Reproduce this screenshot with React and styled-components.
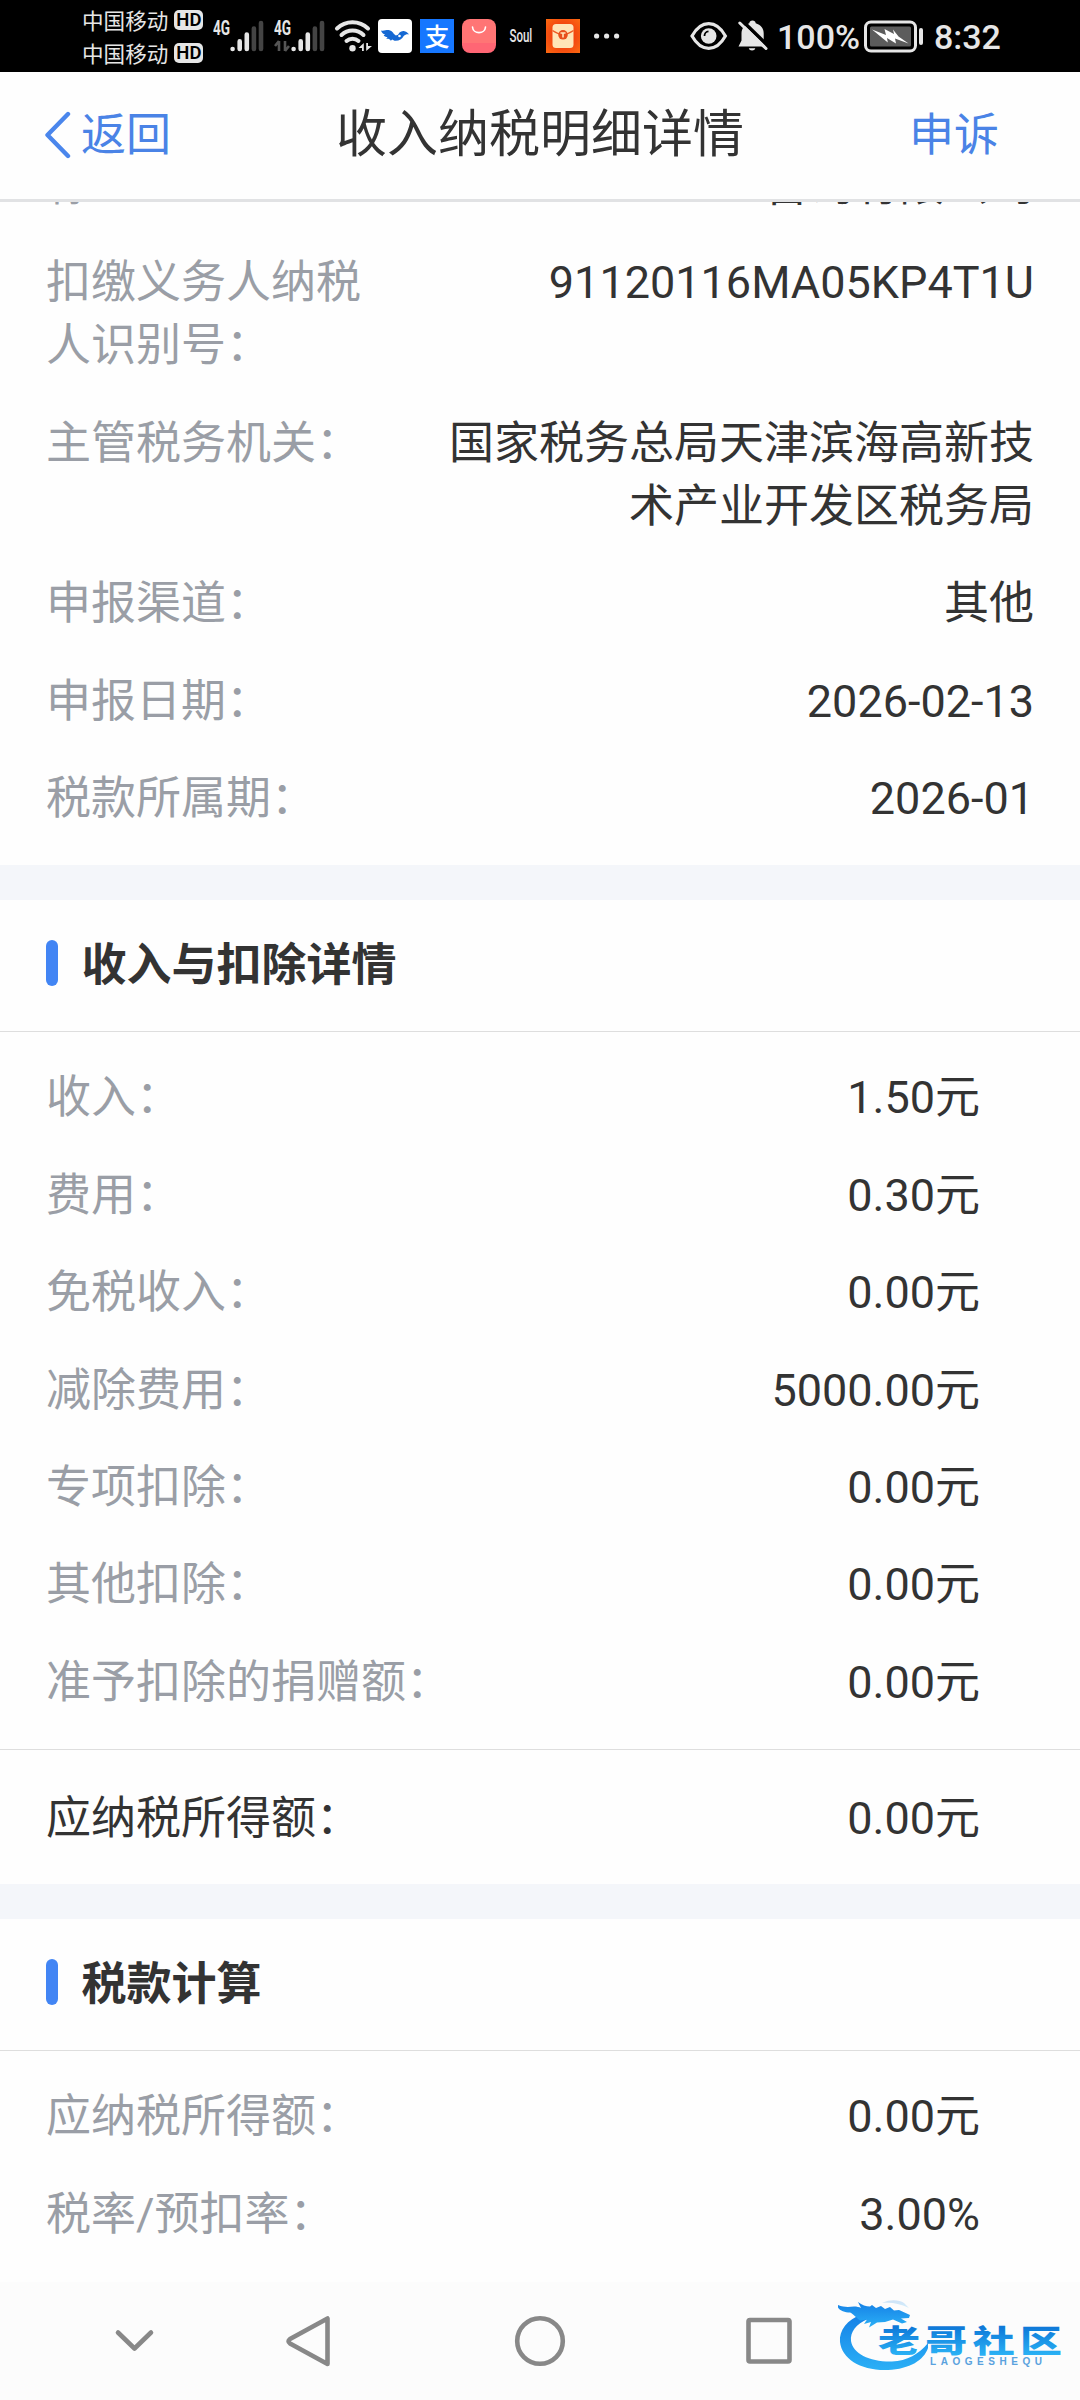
import styled, { createGlobalStyle } from 'styled-components';

const GlobalStyle = createGlobalStyle`
  * {
    box-sizing: border-box;
  }
  body {
    margin: 0;
    background: #fefefe;
    font-family: Roboto, 'Noto Sans CJK SC', sans-serif;
    color: #333;
  }
`;

const Screen = styled.div`
  display: flex;
  flex-direction: column;
  width: 1080px;
  height: 2400px;
  overflow: hidden;
  background: #fefefe;
`;

const StatusBar = styled.div`
  display: flex;
  align-items: center;
  flex: none;
  height: 72px;
  padding-left: 82px;
  background: #000;
  color: #e6e6e6;
`;
const Carriers = styled.div`
  display: flex;
  flex-direction: column;
  width: 131px;
`;
const Carrier = styled.div`
  display: flex;
  align-items: center;
  gap: 6px;
  height: 33px;
  font-family: 'Noto Sans CJK SC', sans-serif;
  font-size: 21.6px;
  line-height: 33px;
`;
const HdBadge = styled.span`
  width: 29px;
  height: 20px;
  border-radius: 5px;
  background: #e6e6e6;
  color: #000;
  font-family: Roboto, sans-serif;
  font-size: 18.5px;
  font-weight: 600;
  line-height: 21px;
  text-align: center;
`;
const StatusIcon = styled.svg`
  flex: none;
  display: block;
  width: ${({ $w }) => $w}px;
  height: 72px;
  margin-left: ${({ $gap = 0 }) => $gap}px;
`;
const AppIcon = styled.div`
  flex: none;
  width: 34px;
  height: 34px;
  margin-left: ${({ $gap = 8 }) => $gap}px;
  border-radius: ${({ $radius = 0 }) => $radius}px;
  background: ${({ $bg }) => $bg};
  color: #fff;
  svg {
    display: block;
  }
`;
const Alipay = styled(AppIcon)`
  font-family: 'Noto Sans CJK SC', sans-serif;
  font-size: 25px;
  font-weight: 500;
  line-height: 33px;
  text-align: center;
`;
const SoulLabel = styled.div`
  width: 34px;
  margin-left: 8px;
  font-size: 18px;
  font-weight: 500;
  line-height: 34px;
  text-align: center;
  span {
    display: inline-block;
    transform: scaleX(0.64);
    margin: 0 -8px;
  }
`;
const StatusText = styled.span`
  width: ${({ $w }) => $w}px;
  margin-left: ${({ $gap }) => $gap}px;
  font-size: 34px;
  font-weight: 500;
  line-height: 72px;
  padding-top: 2px;
  white-space: nowrap;
`;

const Header = styled.header`
  display: grid;
  grid-template-columns: 1fr auto 1fr;
  align-items: center;
  flex: none;
  height: 130px;
  padding: 0 81px 1px 44px;
  border-bottom: 3px solid #e1e2e4;
`;
const HeaderAction = styled.div`
  display: flex;
  align-items: center;
  justify-content: ${({ $end }) => ($end ? 'flex-end' : 'flex-start')};
  gap: 10px;
  font-size: 45px;
  line-height: 63px;
  color: #4a83e6;
`;
const Title = styled.h1`
  margin: 0 0 0 37px;
  font-size: 51px;
  font-weight: 400;
  line-height: 70px;
`;

const Content = styled.main`
  flex: 1;
  min-height: 0;
  overflow: hidden;
`;
const Card = styled.section`
  background: #fefefe;
  margin-bottom: ${({ $gap = 35 }) => $gap}px;
`;
const Backdrop = styled.div`
  background: #f4f6fa;
`;
const SectionTitle = styled.h2`
  display: flex;
  align-items: center;
  gap: 23.5px;
  height: 132px;
  margin: 0;
  padding: 0 46px 7px;
  border-bottom: 1px solid #dedede;
  font-size: 45px;
  font-weight: 700;
  &::before {
    content: '';
    width: 12px;
    height: 46px;
    margin-top: 2px;
    border-radius: 6px;
    background: #4285f4;
  }
`;
const Rows = styled.dl`
  display: flex;
  flex-direction: column;
  gap: 34.4px;
  margin: 0;
  padding: ${({ $pad }) => $pad};
  margin-top: ${({ $scrolled = 0 }) => -$scrolled}px;
`;
const Row = styled.div`
  display: flex;
  justify-content: space-between;
  font-size: 45px;
  line-height: 63px;
`;
const Label = styled.dt`
  width: ${({ $narrow }) => ($narrow ? '330px' : 'auto')};
  color: ${({ $strong }) => ($strong ? '#333' : '#9a9ea6')};
`;
const Value = styled.dd`
  max-width: 600px;
  margin: 0;
  text-align: right;
`;
const Total = styled.dl`
  margin: 0;
  padding: 36.5px 100px 34px 46px;
  border-top: 1px solid #dedede;
`;

const NavBar = styled.nav`
  display: flex;
  align-items: center;
  flex: none;
  height: 118px;
  padding-left: 112px;
  background: #fcfcfc;
`;
const NavIcon = styled.svg`
  flex: none;
  width: 54px;
  height: 54px;
  margin-right: ${({ $after }) => $after}px;
  fill: none;
  stroke: #888;
  stroke-width: 4.6;
  stroke-linecap: round;
  stroke-linejoin: round;
`;
const Brand = styled.svg`
  flex: none;
  width: 240px;
  height: 90px;
`;

// the list is scrolled, only the tail of the first row stays in view
const declaration = [
  ['称：', '咨询有限公司'],
  ['扣缴义务人纳税人识别号：', '91120116MA05KP4T1U'],
  ['主管税务机关：', '国家税务总局天津滨海高新技术产业开发区税务局'],
  ['申报渠道：', '其他'],
  ['申报日期：', '2026-02-13'],
  ['税款所属期：', '2026-01'],
];

const income = [
  ['收入：', '1.50元'],
  ['费用：', '0.30元'],
  ['免税收入：', '0.00元'],
  ['减除费用：', '5000.00元'],
  ['专项扣除：', '0.00元'],
  ['其他扣除：', '0.00元'],
  ['准予扣除的捐赠额：', '0.00元'],
];

const taxes = [
  ['应纳税所得额：', '0.00元'],
  ['税率/预扣率：', '3.00%'],
];

const DetailRow = ({ item, narrow, strong }) => (
  <Row>
    <Label $narrow={narrow} $strong={strong}>
      {item[0]}
    </Label>
    <Value>{item[1]}</Value>
  </Row>
);

const Signal = ({ gap, data }) => (
  <StatusIcon $w={51} $gap={gap} viewBox="0 0 51 72">
    <g transform="translate(0 34.5) scale(0.68 1)">
      <text x="0" y="0" fontSize="20" fontWeight="700" fill="#e6e6e6">
        4G
      </text>
    </g>
    {data && (
      <path d="M5 41v10M5 41l-4 5M11 41v10M11 51l4-5" stroke="#555" strokeWidth="2.6" fill="none" />
    )}
    <g strokeWidth="4.6" strokeLinecap="round">
      <path d="M19.6 49v0M26.7 41.4V49M33.8 34.5V49" stroke="#e6e6e6" />
      <path d="M40.9 28.5V49M48 23V49" stroke="#444" />
    </g>
  </StatusIcon>
);

const Wifi = () => (
  <StatusIcon $w={38} $gap={9} viewBox="0 0 38 72">
    <g fill="none" stroke="#e6e6e6" strokeWidth="4" strokeLinecap="round">
      <path d="M3 28.5a22.5 22.5 0 0 1 31 0" />
      <path d="M7.5 35a16 16 0 0 1 22 0" />
      <path d="M12.5 41a9 9 0 0 1 12 0" />
    </g>
    <circle cx="18.5" cy="48.3" r="3.2" fill="#e6e6e6" />
    <path d="M29.8 43v8h-1.8v-3h-3.5zM32.2 51v-8h1.8v3h4z" fill="#e6e6e6" />
  </StatusIcon>
);

const Status = () => (
  <StatusBar>
    <Carriers>
      <Carrier>
        中国移动<HdBadge>HD</HdBadge>
      </Carrier>
      <Carrier>
        中国移动<HdBadge>HD</HdBadge>
      </Carrier>
    </Carriers>
    <Signal />
    <Signal gap={10} data />
    <Wifi />
    <AppIcon $radius={4} $bg="#fff" $gap={6}>
      <svg width="34" height="34" viewBox="0 0 34 34">
        <path
          fill="#1568d3"
          d="M3 11.5c3 1 5.5-1 8.5-.2 3.5 1 4 4.2 6.5 5.2.5-.2 2-.5 2.500-1.500 1.500-2.500 4-3.200 6-2.800 2.500.6 3 2 4.700 3.100-2.500-.3-4 .2-5.500 1.700-1.700 3.200-4.800 5.200-9.200 4.800l-2.300-1.200-1.400 1.200c-.8-1.800-2.200-2.200-4.500-2.100l1.200-1.600c-1.800 0-3.200-.6-3.800-1.800l1.500-.7C4.900 14.800 3.500 13.500 3 11.500z"
        />
        <circle cx="21.5" cy="17" r="1.3" fill="#fff" />
      </svg>
    </AppIcon>
    <Alipay $bg="#1677ff">支</Alipay>
    <AppIcon $radius={8} $bg="linear-gradient(#ff7575 0 70%, #ff6674 70%)">
      <svg width="34" height="34" viewBox="0 0 34 34">
        <path
          d="M10.5 8c.5 7.5 12.5 7.5 13 0"
          fill="none"
          stroke="#fff"
          strokeWidth="1.6"
          strokeLinecap="round"
        />
      </svg>
    </AppIcon>
    <SoulLabel>
      <span>Soul</span>
    </SoulLabel>
    <AppIcon $bg="radial-gradient(#f03c10 35%, #fc6a10)">
      <svg width="34" height="34" viewBox="0 0 34 34">
        <rect x="6.5" y="5" width="21" height="24" rx="3.5" fill="#ffe5b8" />
        <path d="M6.5 11.5q10.5 7.5 21 0" fill="none" stroke="#ef5b25" strokeWidth="1.3" />
        <circle cx="17" cy="15.8" r="4.8" fill="#e8501c" />
        <path d="M14.5 14h5M17 14v4.5" stroke="#ffe5b8" strokeWidth="1.6" />
      </svg>
    </AppIcon>
    <StatusIcon $w={28} $gap={13} viewBox="0 0 28 72" fill="#e6e6e6">
      <circle cx="3.6" cy="36" r="2.6" />
      <circle cx="13.6" cy="36" r="2.6" />
      <circle cx="23.6" cy="36" r="2.6" />
    </StatusIcon>
    <StatusIcon $w={38} $gap={69} viewBox="0 0 38 72">
      <path
        d="M2 36C6.5 28 12 23.7 18.7 23.7S31 28 35.4 36C31 44 25.4 48.3 18.7 48.3S6.5 44 2 36z"
        fill="none"
        stroke="#e6e6e6"
        strokeWidth="3.2"
      />
      <circle cx="18.7" cy="36" r="7.8" fill="#e6e6e6" />
      <path d="M14.5 36a4.5 4.5 0 0 1 4-4.6" fill="none" stroke="#000" strokeWidth="1.8" />
    </StatusIcon>
    <StatusIcon $w={30} $gap={10} viewBox="0 0 30 72">
      <path
        d="M14.5 20.5c1.8 0 3 1 3.200 2.700 5 1.400 8 5 8 10.300v6.500l3 6.500H.5l3-6V33.500c0-5 3-8.800 7.800-10.300.2-1.700 1.400-2.700 3.200-2.700zM10.800 48.300h6.500c-.7 3-5.800 3-6.500 0z"
        fill="#e6e6e6"
      />
      <path d="M4 20.5L31 47" stroke="#000" strokeWidth="3.6" />
      <path d="M1.8 23L28 48.5" stroke="#e6e6e6" strokeWidth="3" strokeLinecap="round" />
    </StatusIcon>
    <StatusText $w={80} $gap={9}>
      100%
    </StatusText>
    <StatusIcon $w={61} $gap={7} viewBox="0 0 61 72">
      <rect x="1.5" y="22" width="50" height="29" rx="5.5" fill="#000" stroke="#e6e6e6" strokeWidth="3" />
      <rect x="6" y="26.5" width="41" height="20" rx="1.5" fill="#5c5c5c" />
      <path d="M8 29.5l14 5.5-1.5-6 9.500 5-1-4.500 5.500 7 10 7-13.500-5 1 5-9-5.500.8 4.500z" fill="#fff" />
      <path d="M57 30v13" stroke="#e6e6e6" strokeWidth="4" strokeLinecap="round" />
    </StatusIcon>
    <StatusText $w={70} $gap={9}>
      8:32
    </StatusText>
  </StatusBar>
);

const BrandLogo = () => (
  <Brand viewBox="0 0 240 90">
    <defs>
      <linearGradient id="ring" x1="0" y1="0" x2="0" y2="1">
        <stop offset="0" stopColor="#1580e6" />
        <stop offset="1" stopColor="#2bb0f6" />
      </linearGradient>
      <linearGradient id="name" x1="0" y1="0" x2="0" y2="1">
        <stop offset="0.25" stopColor="#0f7ad9" />
        <stop offset="0.9" stopColor="#2bb4f6" />
      </linearGradient>
    </defs>
    <g fill="url(#ring)">
      <path d="M24 18C9 24 1 34 2 46c2 17 21 29 48 28 22-1 36-10 40-22v-5C81 58 69 65 54 65.5 32 66 15 58 13 45c-1-9 5-17 17-22z" />
      <path d="M0 9c6 2.5 11 2 16 1.5 3 0 5 .5 7 1.500l-3-6c4 3 8 4.500 12 4.500l2-1.500 4 3 5-2 4 3 5-2 4 3.500 5-.5 11 5-1 3-8 .5 6 3.500-5 1.500-9-4-8 2.500-8 .5-8 5 2-5.500-7 2 3-4.500-7 1c-3-2-7-7-10-8-5 0-10-1.500-12-5z" />
      <path d="M44 7c9-4 17-3 22 0l5 5c-8-4-17-6-27-5z" opacity=".2" />
    </g>
    <g transform="translate(40 55.5) scale(1.165 0.84)">
      <text
        x="0"
        y="0"
        fontFamily="'Noto Sans CJK SC', sans-serif"
        fontSize="36"
        fontWeight="900"
        textLength="158"
        fill="url(#name)"
      >
        老哥社区
      </text>
    </g>
    <text
      x="92"
      y="69"
      fontFamily="'Liberation Sans', sans-serif"
      fontSize="10"
      fontWeight="700"
      textLength="112"
      fill="#5aa2de"
    >
      LAOGESHEQU
    </text>
  </Brand>
);

export default function App() {
  return (
    <Screen>
      <GlobalStyle />
      <Status />
      <Header>
        <HeaderAction>
          <svg width="27" height="48" viewBox="0 0 27 48" fill="none">
            <path
              d="M24 3L3.5 24L24 45"
              stroke="#4a86ec"
              strokeWidth="4.4"
              strokeLinecap="round"
              strokeLinejoin="round"
            />
          </svg>
          返回
        </HeaderAction>
        <Title>收入纳税明细详情</Title>
        <HeaderAction $end>申诉</HeaderAction>
      </Header>
      <Content>
        <Backdrop>
          <Card>
            <Rows $scrolled={48} $pad="0 46px 35px">
              {declaration.map((item) => (
                <DetailRow key={item[0]} item={item} narrow />
              ))}
            </Rows>
          </Card>
          <Card>
            <SectionTitle>收入与扣除详情</SectionTitle>
            <Rows $pad="34.4px 100px 35.6px 46px">
              {income.map((item) => (
                <DetailRow key={item[0]} item={item} />
              ))}
            </Rows>
            <Total>
              <DetailRow item={['应纳税所得额：', '0.00元']} strong />
            </Total>
          </Card>
          <Card $gap={0}>
            <SectionTitle>税款计算</SectionTitle>
            <Rows $pad="34.4px 100px 60px 46px">
              {taxes.map((item) => (
                <DetailRow key={item[0]} item={item} />
              ))}
            </Rows>
          </Card>
        </Backdrop>
      </Content>
      <NavBar>
        <NavIcon $after={117} viewBox="0 0 54 54">
          <path d="M6 18.5L22.5 34.5L39 18.5" />
        </NavIcon>
        <NavIcon $after={176} viewBox="0 0 54 54">
          <path d="M44.5 4.5v45.500L7 29.500q-3-2.200 0-4.500z" />
        </NavIcon>
        <NavIcon $after={175} viewBox="0 0 54 54">
          <circle cx="27" cy="27" r="22.8" />
        </NavIcon>
        <NavIcon $after={42} viewBox="0 0 54 54">
          <rect x="6.5" y="6" width="41" height="41.5" rx="1.5" />
        </NavIcon>
        <BrandLogo />
      </NavBar>
    </Screen>
  );
}
